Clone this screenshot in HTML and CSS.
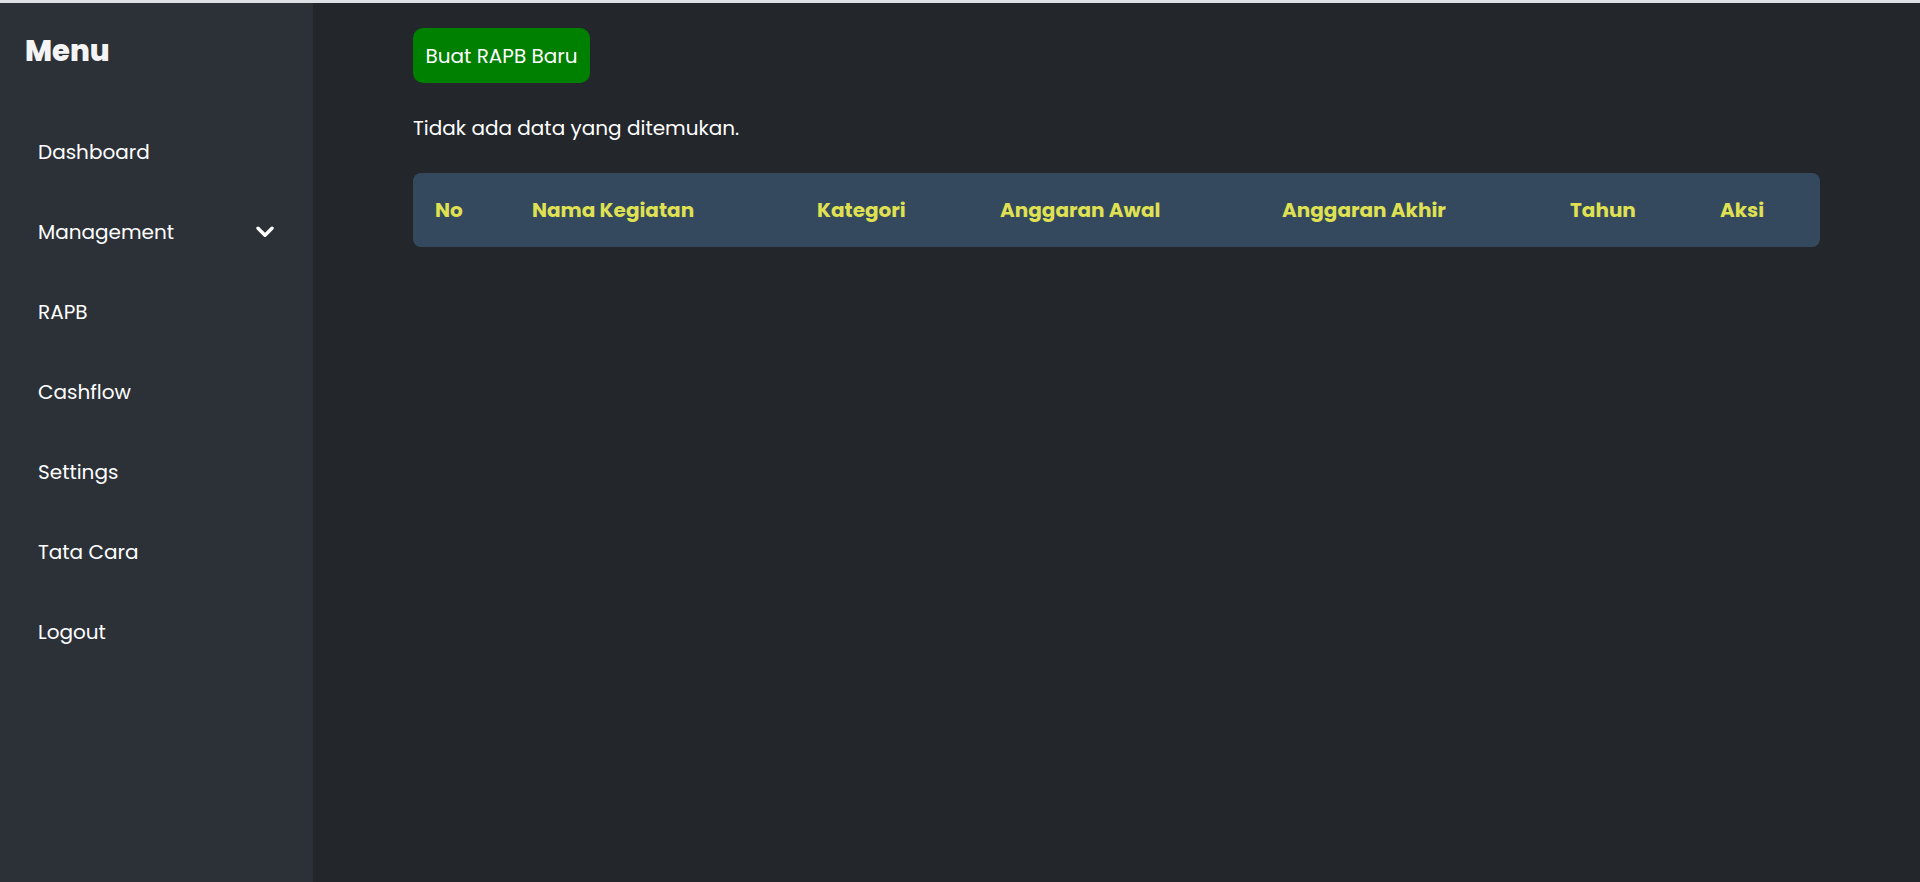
FILE: index.html
```html
<!DOCTYPE html>
<html lang="id">
<head>
<meta charset="utf-8">
<title>RAPB</title>
<link rel="stylesheet" href="styles.css">
</head>
<body>
<div class="topline"></div>
<div class="layout">
  <aside class="sidebar">
    <h2 class="sidebar-title">Menu</h2>
    <nav class="nav">
      <a class="nav-item" href="#">Dashboard</a>
      <a class="nav-item" href="#">Management
        <svg class="chevron" viewBox="0 0 18 12" width="18" height="12"><path d="M2 2.2 L9 9.2 L16 2.2" fill="none" stroke="#fff" stroke-width="3.4" stroke-linecap="round" stroke-linejoin="round"/></svg>
      </a>
      <a class="nav-item" href="#">RAPB</a>
      <a class="nav-item" href="#">Cashflow</a>
      <a class="nav-item" href="#">Settings</a>
      <a class="nav-item" href="#">Tata Cara</a>
      <a class="nav-item" href="#">Logout</a>
    </nav>
  </aside>
  <main class="main">
    <button class="btn-new" type="button">Buat RAPB Baru</button>
    <p class="empty">Tidak ada data yang ditemukan.</p>
    <div class="table-wrap">
      <table class="data-table">
        <colgroup>
          <col class="c-no"><col class="c-nama"><col class="c-kat"><col class="c-awal"><col class="c-akhir"><col class="c-tahun"><col class="c-aksi">
        </colgroup>
        <thead>
          <tr>
            <th>No</th>
            <th>Nama Kegiatan</th>
            <th>Kategori</th>
            <th>Anggaran Awal</th>
            <th>Anggaran Akhir</th>
            <th>Tahun</th>
            <th>Aksi</th>
          </tr>
        </thead>
      </table>
    </div>
  </main>
</div>
</body>
</html>
```

FILE: styles.css
```css
* { box-sizing: border-box; }
html, body {
  margin: 0;
  padding: 0;
  height: 100%;
}
body {
  background: #23262b;
  color: #ffffff;
  font-family: "Poppins", "Open Sans", "DejaVu Sans", sans-serif;
  overflow: hidden;
}
.topline {
  height: 3px;
  background: #dde1e6;
}
.layout {
  display: flex;
  height: calc(100vh - 3px);
}
.sidebar {
  width: 313px;
  flex: 0 0 313px;
  background: #2c3138;
  padding-top: 28px;
}
.sidebar-title {
  margin: 0;
  padding-left: 25px;
  font-size: 29px;
  line-height: 40px;
  font-weight: 800;
  color: #f4f4f4;
}
.nav {
  margin-top: 41px;
  display: flex;
  flex-direction: column;
}
.nav-item {
  height: 80px;
  display: flex;
  align-items: center;
  justify-content: space-between;
  padding: 0 39px 0 38px;
  color: #ffffff;
  text-decoration: none;
  font-size: 20px;
}
.chevron { display: block; }
.main {
  flex: 1;
  padding: 25px 100px 0 100px;
}
.btn-new {
  display: block;
  height: 55px;
  width: 177px;
  padding: 0;
  border: none;
  border-radius: 10px;
  background: #008000;
  color: #ffffff;
  font-family: inherit;
  font-size: 20px;
}
.empty {
  margin: 30px 0 0;
  line-height: 30px;
  font-size: 20px;
}
.table-wrap {
  margin-top: 30px;
  border-radius: 8px;
  overflow: hidden;
  background: #34495e;
}
.data-table {
  width: 100%;
  table-layout: fixed;
  border-collapse: collapse;
}
.c-no { width: 119px; }
.c-nama { width: 285px; }
.c-kat { width: 183px; }
.c-awal { width: 282px; }
.c-akhir { width: 288px; }
.c-tahun { width: 150px; }
.data-table th {
  height: 74px;
  padding: 0;
  text-align: left;
  font-size: 20px;
  font-weight: 700;
  color: #dfe052;
}
.data-table th:first-child { padding-left: 22px; }
```
